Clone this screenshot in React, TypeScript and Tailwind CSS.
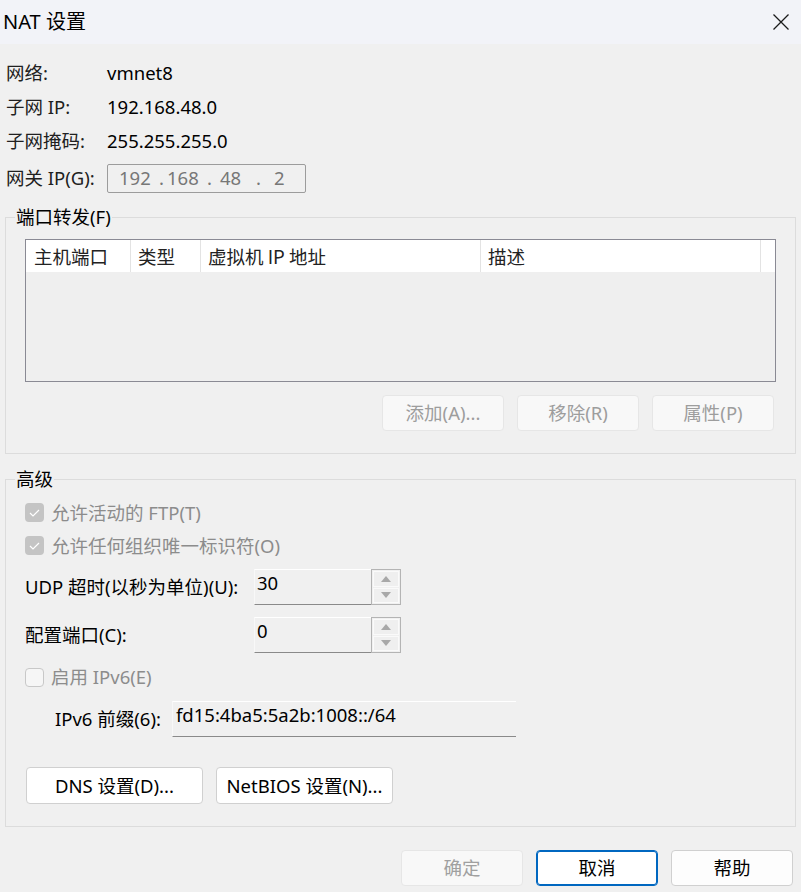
import React from 'react';

const font = { fontFamily: '"Noto Sans", "Noto Sans CJK SC", sans-serif' };

function Spinner({ value }: { value: string }) {
    return (
        <div className="flex h-[36px] w-[147px]">
            <div className="flex-1 border-t border-l border-t-white border-l-[#f8f8f8] border-b border-b-[#8a8a8a] bg-[#f0f0f0] pl-[2px] text-[18.5px] leading-[26px] text-black">
                {value}
            </div>
            <div className="flex w-[30px] flex-col gap-[1px] border border-[#b4b4b4] p-[1px]">
                <div className="flex flex-1 items-center justify-center border border-[#fafafa] bg-[#efefef]">
                    <svg width="10" height="6" viewBox="0 0 10 6"><path d="M5 0 L10 6 L0 6 Z" fill="#a8a8a8" /></svg>
                </div>
                <div className="flex flex-1 items-center justify-center border border-[#fafafa] bg-[#efefef]">
                    <svg width="10" height="6" viewBox="0 0 10 6"><path d="M0 0 L10 0 L5 6 Z" fill="#a8a8a8" /></svg>
                </div>
            </div>
        </div>
    );
}

function Check({ checked, label }: { checked: boolean; label: string }) {
    return (
        <div className="flex h-[33px] items-center">
            {checked ? (
                <div className="flex h-[19px] w-[19px] items-center justify-center rounded-[4px] bg-[#c4c4c4]">
                    <svg width="11" height="8" viewBox="0 0 11 8"><path d="M1 4 L4 7 L10 1" stroke="#fff" strokeWidth="1.2" fill="none" /></svg>
                </div>
            ) : (
                <div className="h-[19px] w-[19px] rounded-[4px] border border-[#c8c8c8] bg-[#f6f6f6]" />
            )}
            <span className="ml-[7px] text-[18.5px] text-[#8c8c8c]">{label}</span>
        </div>
    );
}

function DisabledButton({ children }: { children: React.ReactNode }) {
    return (
        <div className="flex h-[36px] w-[122px] items-center justify-center rounded-[4px] border border-[#e6e6e6] bg-[#f8f8f8] text-[18.5px] text-[#9d9d9d]">
            {children}
        </div>
    );
}

export default function App() {
    return (
        <div className="h-[892px] w-[801px] overflow-hidden bg-[#f0f0f0] text-black" style={font}>
            <div className="flex h-[44px] items-center justify-between bg-[#f2f3f8] pl-[3px] pr-[12px]">
                <span className="text-[20px]">NAT 设置</span>
                <svg width="16" height="16" viewBox="0 0 16 16">
                    <path d="M0.5 0.5 L15.5 15.5 M15.5 0.5 L0.5 15.5" stroke="#1a1a1a" strokeWidth="1.3" />
                </svg>
            </div>

            <div className="px-[5px] pt-[12px]">
                <div className="pl-[1px] text-[18.5px]">
                    <div className="flex h-[34px] items-center">
                        <span className="w-[101px] text-[#202020]">网络:</span>
                        <span>vmnet8</span>
                    </div>
                    <div className="flex h-[34px] items-center">
                        <span className="w-[101px] text-[#202020]">子网 IP:</span>
                        <span>192.168.48.0</span>
                    </div>
                    <div className="flex h-[34px] items-center">
                        <span className="w-[101px] text-[#202020]">子网掩码:</span>
                        <span>255.255.255.0</span>
                    </div>
                    <div className="flex h-[40px] items-center">
                        <span className="w-[101px] text-[#202020]">网关 IP(G):</span>
                        <div className="flex h-[29px] w-[199px] items-center rounded-[2px] border border-[#9c9c9c] text-[#777]">
                            <span className="ml-[11px] w-[40px]">192</span>
                            <span className="w-[8px]">.</span>
                            <span className="w-[40px]">168</span>
                            <span className="w-[13px]">.</span>
                            <span className="w-[36px]">48</span>
                            <span className="w-[18px]">.</span>
                            <span>2</span>
                        </div>
                    </div>
                </div>

                <fieldset className="mt-[8px] border border-[#dcdcdc]">
                    <legend className="ml-[9px] px-[1px] text-[18.5px] leading-[22px]">端口转发(F)</legend>
                    <div className="px-[19px] pb-[22px]">
                        <div className="mt-[11px] h-[143px] border border-[#8a8a94] bg-[#efefef]">
                            <div className="flex h-[32px] bg-white text-[18.5px] text-[#222]" style={{ fontFamily: '"Noto Sans CJK SC", sans-serif' }}>
                                <div className="w-[105px] border-r border-[#e3e3e3] pl-[8px] leading-[32px]">主机端口</div>
                                <div className="w-[70px] border-r border-[#e3e3e3] pl-[7px] leading-[32px]">类型</div>
                                <div className="w-[280px] border-r border-[#e3e3e3] pl-[7px] leading-[32px]">虚拟机 IP 地址</div>
                                <div className="w-[280px] border-r border-[#e3e3e3] pl-[7px] leading-[32px]">描述</div>
                                <div className="flex-1" />
                            </div>
                        </div>
                        <div className="mt-[13px] flex justify-end gap-[13px] pr-[2px]">
                            <DisabledButton>添加(A)...</DisabledButton>
                            <DisabledButton>移除(R)</DisabledButton>
                            <DisabledButton>属性(P)</DisabledButton>
                        </div>
                    </div>
                </fieldset>

                <fieldset className="mt-[14px] border border-[#dcdcdc]">
                    <legend className="ml-[9px] px-[1px] text-[18.5px] leading-[22px]">高级</legend>
                    <div className="px-[19px] pb-[22px]">
                        <div className="pt-[6px]">
                            <Check checked label="允许活动的 FTP(T)" />
                            <Check checked label="允许任何组织唯一标识符(O)" />
                        </div>
                        <div className="mt-[7px] flex items-center">
                            <span className="w-[229px] text-[18.5px]">UDP 超时(以秒为单位)(U):</span>
                            <Spinner value="30" />
                        </div>
                        <div className="mt-[12px] flex items-center">
                            <span className="w-[229px] text-[18.5px]">配置端口(C):</span>
                            <Spinner value="0" />
                        </div>
                        <div className="mt-[6px] flex h-[36px] items-center">
                            <Check checked={false} label="启用 IPv6(E)" />
                        </div>
                        <div className="mt-[6px] flex items-center">
                            <span className="ml-[30px] w-[117px] text-[18.5px]">IPv6 前缀(6):</span>
                            <div className="h-[36px] w-[344px] border-t border-l border-t-white border-l-[#f8f8f8] border-b border-b-[#8a8a8a] bg-[#f0f0f0] pl-[3px] text-[18.5px] leading-[26px]">
                                fd15:4ba5:5a2b:1008::/64
                            </div>
                        </div>
                        <div className="mt-[30px] flex gap-[13px] pl-[1px]">
                            <div className="flex h-[37px] w-[177px] items-center justify-center rounded-[4px] border border-[#d0d0d0] bg-white text-[18.5px]">
                                DNS 设置(D)...
                            </div>
                            <div className="flex h-[37px] w-[177px] items-center justify-center rounded-[4px] border border-[#d0d0d0] bg-white text-[18.5px]">
                                NetBIOS 设置(N)...
                            </div>
                        </div>
                    </div>
                </fieldset>

                <div className="mt-[23px] flex justify-end gap-[13px] pr-[3px] text-[18.5px]">
                    <div className="flex h-[36px] w-[122px] items-center justify-center rounded-[4px] border border-[#e6e6e6] bg-[#f8f8f8] text-[#a0a0a0]">
                        确定
                    </div>
                    <div className="flex h-[36px] w-[122px] items-center justify-center rounded-[4px] border border-[#0067c0] bg-white shadow-[inset_0_0_0_1px_#0067c0]">
                        取消
                    </div>
                    <div className="flex h-[36px] w-[122px] items-center justify-center rounded-[4px] border border-[#d0d0d0] bg-[#fdfdfd]">
                        帮助
                    </div>
                </div>
            </div>
        </div>
    );
}
